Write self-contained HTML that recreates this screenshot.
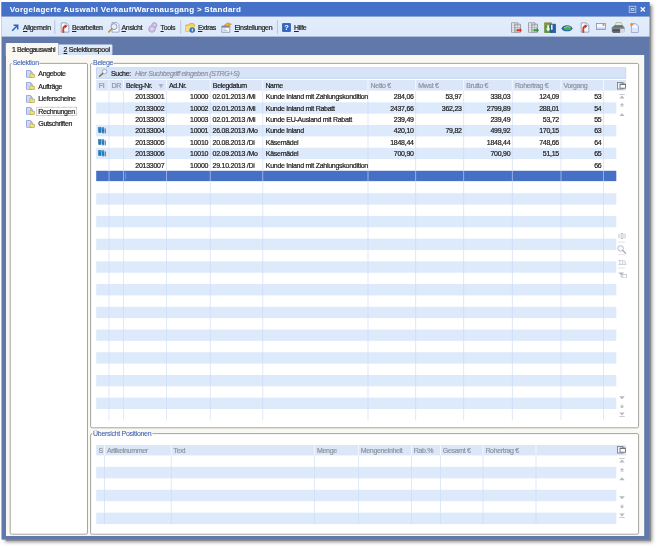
<!DOCTYPE html>
<html><head><meta charset="utf-8"><title>Vorgelagerte Auswahl</title>
<style>
*{box-sizing:border-box;margin:0;padding:0}
html,body{width:658px;height:548px;background:#fff;overflow:hidden}
body{font-family:"Liberation Sans",sans-serif;font-size:7px;letter-spacing:-0.33px;color:#1a1a1a;position:relative}
.a{position:absolute}
.t{position:absolute;white-space:nowrap;line-height:11px;height:11px;-webkit-text-stroke:0.2px currentColor}
.r{text-align:right}
.n{letter-spacing:-0.26px}
.m{letter-spacing:-0.27px}
.g{color:#8d949e}
.lbl{color:#3d62b8;-webkit-text-stroke:0.05px currentColor;letter-spacing:-0.3px}
.u{text-decoration:underline}
</style></head><body><div id="root" style="position:absolute;left:0;top:0;width:658px;height:548px;will-change:transform">

<div class="a" style="left:6px;top:6px;width:645px;height:535px;background:#8e8e8e;box-shadow:0 0 3.5px 1px #8e8e8e"></div>
<svg class="a" style="left:0;top:0" width="658" height="548" viewBox="0 0 658 548"><rect x="1.5" y="2" width="648" height="537.6" fill="#6079aa"/><rect x="1.5" y="2" width="648" height="14.6" fill="#4572c8"/><defs><linearGradient id="tbg" x1="0" y1="0" x2="0" y2="1"><stop offset="0" stop-color="#e4eefc"/><stop offset="1" stop-color="#dce9fa"/></linearGradient><linearGradient id="tab2" x1="0" y1="0" x2="0" y2="1"><stop offset="0" stop-color="#e3ecf9"/><stop offset="1" stop-color="#d3e0f3"/></linearGradient></defs><rect x="1.5" y="16.6" width="648" height="20" fill="url(#tbg)"/><rect x="6" y="55" width="638.2" height="481" fill="#faf8f2"/><rect x="5.8" y="43" width="52.6" height="13" fill="#faf8f2" rx="0.8"/><rect x="58.6" y="44.6" width="53.8" height="10.4" fill="url(#tab2)" rx="0.8"/><rect x="10.2" y="63.4" width="77.3" height="470.8" rx="1.5" fill="#fff" stroke="#9b9b95" stroke-width="0.9"/><rect x="11.8" y="61.4" width="27.7" height="4" fill="#faf8f2"/><rect x="90.6" y="63.4" width="548" height="364.4" rx="1.5" fill="#fff" stroke="#9b9b95" stroke-width="0.9"/><rect x="92.2" y="61.4" width="21.2" height="4" fill="#faf8f2"/><rect x="90.6" y="433.6" width="548" height="100.6" rx="1.5" fill="#fff" stroke="#9b9b95" stroke-width="0.9"/><rect x="92.2" y="431.6" width="60.2" height="4" fill="#faf8f2"/><rect x="96.4" y="67.8" width="529.4" height="10.5" fill="#d7e3f7" stroke="#bccdea" stroke-width="0.7"/><rect x="96.2" y="80" width="529.8" height="10.6" fill="#dbe7f9"/><rect x="96.2" y="102.31" width="520.1" height="11.36" fill="#ddeafc"/><rect x="96.2" y="125.03" width="520.1" height="11.36" fill="#ddeafc"/><rect x="96.2" y="147.75" width="520.1" height="11.36" fill="#ddeafc"/><rect x="96.2" y="170.77" width="520.1" height="10.36" fill="#4670c5"/><rect x="96.2" y="193.19" width="520.1" height="11.36" fill="#ddeafc"/><rect x="96.2" y="215.91" width="520.1" height="11.36" fill="#ddeafc"/><rect x="96.2" y="238.63" width="520.1" height="11.36" fill="#ddeafc"/><rect x="96.2" y="261.35" width="520.1" height="11.36" fill="#ddeafc"/><rect x="96.2" y="284.07" width="520.1" height="11.36" fill="#ddeafc"/><rect x="96.2" y="306.79" width="520.1" height="11.36" fill="#ddeafc"/><rect x="96.2" y="329.51" width="520.1" height="11.36" fill="#ddeafc"/><rect x="96.2" y="352.23" width="520.1" height="11.36" fill="#ddeafc"/><rect x="96.2" y="374.95" width="520.1" height="11.36" fill="#ddeafc"/><rect x="96.2" y="397.67" width="520.1" height="11.36" fill="#ddeafc"/><rect x="108.6" y="80" width="0.8" height="10.6" fill="#fff" fill-opacity=".85"/><rect x="108.6" y="90.95" width="0.8" height="329.44" fill="#c9daf3" fill-opacity=".75"/><rect x="123" y="80" width="0.8" height="10.6" fill="#fff" fill-opacity=".85"/><rect x="123" y="90.95" width="0.8" height="329.44" fill="#c9daf3" fill-opacity=".75"/><rect x="166" y="80" width="0.8" height="10.6" fill="#fff" fill-opacity=".85"/><rect x="166" y="90.95" width="0.8" height="329.44" fill="#c9daf3" fill-opacity=".75"/><rect x="209.8" y="80" width="0.8" height="10.6" fill="#fff" fill-opacity=".85"/><rect x="209.8" y="90.95" width="0.8" height="329.44" fill="#c9daf3" fill-opacity=".75"/><rect x="262.4" y="80" width="0.8" height="10.6" fill="#fff" fill-opacity=".85"/><rect x="262.4" y="90.95" width="0.8" height="329.44" fill="#c9daf3" fill-opacity=".75"/><rect x="367.6" y="80" width="0.8" height="10.6" fill="#fff" fill-opacity=".85"/><rect x="367.6" y="90.95" width="0.8" height="329.44" fill="#c9daf3" fill-opacity=".75"/><rect x="415.3" y="80" width="0.8" height="10.6" fill="#fff" fill-opacity=".85"/><rect x="415.3" y="90.95" width="0.8" height="329.44" fill="#c9daf3" fill-opacity=".75"/><rect x="463.3" y="80" width="0.8" height="10.6" fill="#fff" fill-opacity=".85"/><rect x="463.3" y="90.95" width="0.8" height="329.44" fill="#c9daf3" fill-opacity=".75"/><rect x="511.9" y="80" width="0.8" height="10.6" fill="#fff" fill-opacity=".85"/><rect x="511.9" y="90.95" width="0.8" height="329.44" fill="#c9daf3" fill-opacity=".75"/><rect x="560.6" y="80" width="0.8" height="10.6" fill="#fff" fill-opacity=".85"/><rect x="560.6" y="90.95" width="0.8" height="329.44" fill="#c9daf3" fill-opacity=".75"/><rect x="603.1" y="80" width="0.8" height="10.6" fill="#fff" fill-opacity=".85"/><rect x="603.1" y="90.95" width="0.8" height="329.44" fill="#c9daf3" fill-opacity=".75"/><rect x="96.2" y="445" width="529.8" height="10.4" fill="#dbe7f9"/><rect x="96.2" y="466.85" width="520.1" height="11.45" fill="#ddeafc"/><rect x="96.2" y="489.75" width="520.1" height="11.45" fill="#ddeafc"/><rect x="96.2" y="512.65" width="520.1" height="11.45" fill="#ddeafc"/><rect x="104.1" y="445" width="0.8" height="10.4" fill="#fff" fill-opacity=".85"/><rect x="104.1" y="455.4" width="0.8" height="68.7" fill="#c9daf3" fill-opacity=".75"/><rect x="170.8" y="445" width="0.8" height="10.4" fill="#fff" fill-opacity=".85"/><rect x="170.8" y="455.4" width="0.8" height="68.7" fill="#c9daf3" fill-opacity=".75"/><rect x="314.2" y="445" width="0.8" height="10.4" fill="#fff" fill-opacity=".85"/><rect x="314.2" y="455.4" width="0.8" height="68.7" fill="#c9daf3" fill-opacity=".75"/><rect x="358" y="445" width="0.8" height="10.4" fill="#fff" fill-opacity=".85"/><rect x="358" y="455.4" width="0.8" height="68.7" fill="#c9daf3" fill-opacity=".75"/><rect x="411" y="445" width="0.8" height="10.4" fill="#fff" fill-opacity=".85"/><rect x="411" y="455.4" width="0.8" height="68.7" fill="#c9daf3" fill-opacity=".75"/><rect x="440" y="445" width="0.8" height="10.4" fill="#fff" fill-opacity=".85"/><rect x="440" y="455.4" width="0.8" height="68.7" fill="#c9daf3" fill-opacity=".75"/><rect x="482.6" y="445" width="0.8" height="10.4" fill="#fff" fill-opacity=".85"/><rect x="482.6" y="455.4" width="0.8" height="68.7" fill="#c9daf3" fill-opacity=".75"/><rect x="535.6" y="445" width="0.8" height="10.4" fill="#fff" fill-opacity=".85"/><rect x="535.6" y="455.4" width="0.8" height="68.7" fill="#c9daf3" fill-opacity=".75"/><rect x="36.6" y="107.3" width="39.8" height="8.2" fill="none" stroke="#6c6c6c" stroke-width="0.6" stroke-dasharray="0.7 0.5"/><rect x="54.4" y="20.3" width="0.9" height="13.6" fill="#b4bfd3"/><rect x="180.3" y="20.3" width="0.9" height="13.6" fill="#b4bfd3"/><rect x="276.9" y="20.3" width="0.9" height="13.6" fill="#b4bfd3"/><rect x="618" y="241.7" width="7" height="0.7" fill="#d5d8dd"/><rect x="618" y="254.4" width="7" height="0.7" fill="#d5d8dd"/><rect x="618" y="267.7" width="7" height="0.7" fill="#d5d8dd"/><rect x="125.3" y="172.47" width="0.8" height="7" fill="#8aa0cf"/></svg>
<div class="t lbl" style="left:12.7px;top:57.4px">Selektion</div>
<div class="t lbl" style="left:93.1px;top:57.4px">Belege</div>
<div class="t lbl" style="left:93.1px;top:427.6px">Übersicht Positionen</div>
<div class="t" style="left:9.8px;top:3.2px;font-size:8px;line-height:13px;height:13px;font-weight:bold;color:#fff;letter-spacing:0.27px;-webkit-text-stroke:0">Vorgelagerte Auswahl Verkauf/Warenausgang &gt; Standard</div>
<svg class="a" style="left:628px;top:5px" width="20" height="9" viewBox="0 0 20 9"><rect x="1.2" y="1.3" width="6.6" height="6.2" fill="none" stroke="#b4c8f0" stroke-width="0.9"/><rect x="3.1" y="3.5" width="2.8" height="1.8" fill="#4572c8" stroke="#d6e2f7" stroke-width="0.8"/><path d="M12.7 2.3L16.9 6.5M16.9 2.3L12.7 6.5" stroke="#f4f7fd" stroke-width="1.3"/></svg>
<div class="t" style="left:12px;top:44.2px;letter-spacing:-0.45px">1 Belegauswahl</div>
<div class="t" style="left:63.6px;top:44.2px"><span class="u">2</span> Selektionspool</div>
<svg class="a" style="left:11px;top:24px" width="8" height="8" viewBox="0 0 8 8"><path d="M1.2 6.8L6.2 1.8M2.6 1.3H6.7V5.4" fill="none" stroke="#2f5fc0" stroke-width="1.5"/></svg>
<div class="t" style="left:23px;top:21.5px;color:#222"><span class="u">A</span>llgemein</div>
<svg class="a" style="left:60px;top:22px" width="10" height="11" viewBox="0 0 10 11"><path d="M1.2 0.9h5.2l2.4 2.4v6.8H1.2z" fill="#fbfcff" stroke="#8193b6" stroke-width="0.8"/><path d="M6.2 1v2.5h2.5" fill="#dfe7f5" stroke="#8193b6" stroke-width="0.6"/><path d="M3.3 10.8V6.6Q3.3 4.6 5.2 4.4" fill="none" stroke="#cf3f22" stroke-width="1.9"/><path d="M4.6 2.4L7.2 4.3L4.8 6.4z" fill="#b02a1c"/></svg>
<div class="t" style="left:72px;top:21.5px;color:#222"><span class="u">B</span>earbeiten</div>
<svg class="a" style="left:108px;top:22px" width="12" height="11" viewBox="0 0 12 11"><path d="M4 0.6h5l2 2v7.5H4z" fill="#f6f9fe" stroke="#8b9cc0" stroke-width="0.8"/><circle cx="6" cy="4.6" r="3" fill="#e4eefb" fill-opacity=".9" stroke="#8593ad" stroke-width="0.9"/><path d="M3.8 6.8L0.8 10" stroke="#c08a45" stroke-width="1.6" stroke-linecap="round"/></svg>
<div class="t" style="left:121.5px;top:21.5px;color:#222"><span class="u">A</span>nsicht</div>
<svg class="a" style="left:148px;top:22px" width="10" height="11" viewBox="0 0 10 11"><circle cx="6.3" cy="3.2" r="2.6" fill="#cdbfe2" stroke="#a593c6" stroke-width="0.7"/><circle cx="4" cy="7" r="3.3" fill="#cfc3e4" stroke="#a593c6" stroke-width="0.7"/><circle cx="4" cy="7" r="1" fill="#e9e2f4"/><circle cx="6.4" cy="3.2" r="0.8" fill="#eee8f7"/></svg>
<div class="t" style="left:160.5px;top:21.5px;color:#222"><span class="u">T</span>ools</div>
<svg class="a" style="left:185px;top:22px" width="11" height="11" viewBox="0 0 11 11"><path d="M0.8 3h3l1-1.5h3.7l1 1.5v6.5H0.8z" fill="#f3cf52" stroke="#cda033" stroke-width="0.7"/><path d="M0.8 4.2h9v5.3h-9z" fill="#f8df7e"/><circle cx="7.2" cy="8" r="2.5" fill="#2b78d6" stroke="#1d5bb0" stroke-width="0.5"/><rect x="6.8" y="6.6" width="0.9" height="2.8" fill="#fff"/></svg>
<div class="t" style="left:198px;top:21.5px;color:#222"><span class="u">E</span>xtras</div>
<svg class="a" style="left:221px;top:22px" width="11" height="11" viewBox="0 0 11 11"><path d="M0.8 4h8v6.3h-8z" fill="#f7f9fd" stroke="#7f90b2" stroke-width="0.8"/><path d="M1 4h7.6v1.6H1z" fill="#6d86ba"/><path d="M3 3.4L6.5 0.8L10.4 2.2L7 4.6z" fill="#f0a92a" stroke="#c07a18" stroke-width="0.5"/><path d="M2.2 7h2.2M2.2 8.6h4" stroke="#9aa9c6" stroke-width="0.7"/></svg>
<div class="t" style="left:234.5px;top:21.5px;color:#222"><span class="u">E</span>instellungen</div>
<svg class="a" style="left:282px;top:23px" width="9" height="9" viewBox="0 0 9 9"><rect x="0.3" y="0.3" width="8.4" height="8.4" rx="1" fill="#3565c3" stroke="#234a9a" stroke-width="0.6"/><text x="4.5" y="7.3" font-family="Liberation Sans" font-weight="bold" font-size="7.5" fill="#fff" text-anchor="middle">?</text></svg>
<div class="t" style="left:294px;top:21.5px;color:#222"><span class="u">H</span>ilfe</div>
<svg class="a" style="left:510px;top:21.5px" width="12" height="11" viewBox="0 0 12 11"><path d="M1.5 0.8h6.5v9.5H1.5z" fill="#f2f3f5" stroke="#8e9096" stroke-width="0.8"/><path d="M5 2.2h5.5v8H5z" fill="#e9eaee" stroke="#8e9096" stroke-width="0.8"/><path d="M1.5 3.2h9M1.5 5.6h9M1.5 8h9M4.5 0.8v9.5M7.6 2.2v8" stroke="#9a9ca3" stroke-width="0.6"/><path d="M6.5 7.2h3.2V5.6L12 8.2L9.7 10.8V9.2H6.5z" fill="#d93a30"/></svg>
<svg class="a" style="left:527px;top:21.5px" width="12" height="11" viewBox="0 0 12 11"><path d="M1.5 0.8h6.5v9.5H1.5z" fill="#f2f3f5" stroke="#8e9096" stroke-width="0.8"/><path d="M5 2.2h5.5v8H5z" fill="#e9eaee" stroke="#8e9096" stroke-width="0.8"/><path d="M1.5 3.2h9M1.5 5.6h9M1.5 8h9M4.5 0.8v9.5M7.6 2.2v8" stroke="#9a9ca3" stroke-width="0.6"/><path d="M6.5 7.2h3.2V5.6L12 8.2L9.7 10.8V9.2H6.5z" fill="#2e9a3a"/></svg>
<svg class="a" style="left:544px;top:21.5px" width="12" height="11.5" viewBox="0 0 12 11.5"><path d="M0.6 0.8h6.8v10H0.6z" fill="#8e9a32" stroke="#6b7524" stroke-width="0.6"/><path d="M1.2 3.6h5.6v7H1.2z" fill="#3aa53d"/><path d="M6.6 2.2h5v8.6h-5z" fill="#2a5da8" stroke="#1d4580" stroke-width="0.6"/><path d="M3.2 3.2h1.8v3.4h1.3L4.1 9.4L1.9 6.6h1.3z" fill="#f4f8ee"/><path d="M7 2.8h1.6v5H7z" fill="#e8eef8"/></svg>
<svg class="a" style="left:561px;top:25px" width="12" height="7" viewBox="0 0 12 7"><ellipse cx="6" cy="3.3" rx="5.4" ry="3" fill="#2f62b5"/><ellipse cx="6.4" cy="3.3" rx="3.7" ry="1.9" fill="#45b04a"/><path d="M3 2.6Q6 0.8 9.6 2.2" stroke="#bfe3a0" stroke-width="0.7" fill="none"/></svg>
<svg class="a" style="left:579.5px;top:21.5px" width="10" height="11" viewBox="0 0 10 11"><path d="M1.2 0.9h5.2l2.4 2.4v6.8H1.2z" fill="#fbfcff" stroke="#8193b6" stroke-width="0.8"/><path d="M6.2 1v2.5h2.5" fill="#dfe7f5" stroke="#8193b6" stroke-width="0.6"/><path d="M3.3 10.8V6.6Q3.3 4.6 5.2 4.4" fill="none" stroke="#cf3f22" stroke-width="1.9"/><path d="M4.6 2.4L7.2 4.3L4.8 6.4z" fill="#b02a1c"/></svg>
<svg class="a" style="left:595.5px;top:23.3px" width="10" height="7.2" viewBox="0 0 10 7.2"><rect x="0.4" y="0.4" width="9.2" height="6.2" fill="#f6f7fc" stroke="#7f8db3" stroke-width="0.8"/><path d="M0.6 5.2h8.8" stroke="#b6bfda" stroke-width="1"/><rect x="6.6" y="1.3" width="1.8" height="1.4" fill="#c9564e"/></svg>
<svg class="a" style="left:610.5px;top:21.5px" width="14" height="11.5" viewBox="0 0 14 11.5"><path d="M4.2 3.6L5.2 0.5h5l1 3.1z" fill="#dfeccf" stroke="#8a9a80" stroke-width="0.5"/><path d="M0.8 5.5L3.6 3.2h8L13.4 5.5V9.6L11 11.2H2.2L0.8 9.6z" fill="#6a6e74"/><path d="M0.8 5.5h12.6V6.6H0.8z" fill="#8c9097"/><path d="M9.2 6.8h4.2v3l-2 1.4h-2.2z" fill="#d8dade"/><path d="M2 7.6h6.5v1.6H2z" fill="#4b4e53"/></svg>
<svg class="a" style="left:630px;top:23px" width="9" height="10" viewBox="0 0 9 10"><path d="M1.4 0.8h4.6l2.3 2.3v6.3H1.4z" fill="#f2f6fd" stroke="#7f96c4" stroke-width="0.8"/><path d="M1.8 5h6v4H1.8z" fill="#dbe6f8"/><circle cx="1.7" cy="1.5" r="1.4" fill="#f0892a"/></svg>
<svg class="a" style="left:25.7px;top:69.5px" width="9" height="8" viewBox="0 0 9 8"><path d="M0.5 0.5h3.9l1.8 1.8v5H0.5z" fill="#e3e8f8" stroke="#8796d4" stroke-width="0.8"/><path d="M1.2 1.2h2v5.4h-2z" fill="#cfd6f2"/><path d="M4.4 0.6v1.8h1.7" fill="none" stroke="#8796d4" stroke-width="0.6"/><path d="M3.9 3.6h1.5l0.5 0.6h2.5v3.2H3.9z" fill="#f2e77f" stroke="#a8993a" stroke-width="0.6"/></svg>
<div class="t" style="left:38.3px;top:68.1px">Angebote</div>
<svg class="a" style="left:25.7px;top:82.0px" width="9" height="8" viewBox="0 0 9 8"><path d="M0.5 0.5h3.9l1.8 1.8v5H0.5z" fill="#e3e8f8" stroke="#8796d4" stroke-width="0.8"/><path d="M1.2 1.2h2v5.4h-2z" fill="#cfd6f2"/><path d="M4.4 0.6v1.8h1.7" fill="none" stroke="#8796d4" stroke-width="0.6"/><path d="M3.9 3.6h1.5l0.5 0.6h2.5v3.2H3.9z" fill="#f2e77f" stroke="#a8993a" stroke-width="0.6"/></svg>
<div class="t" style="left:38.3px;top:80.6px">Aufträge</div>
<svg class="a" style="left:25.7px;top:94.5px" width="9" height="8" viewBox="0 0 9 8"><path d="M0.5 0.5h3.9l1.8 1.8v5H0.5z" fill="#e3e8f8" stroke="#8796d4" stroke-width="0.8"/><path d="M1.2 1.2h2v5.4h-2z" fill="#cfd6f2"/><path d="M4.4 0.6v1.8h1.7" fill="none" stroke="#8796d4" stroke-width="0.6"/><path d="M3.9 3.6h1.5l0.5 0.6h2.5v3.2H3.9z" fill="#f2e77f" stroke="#a8993a" stroke-width="0.6"/></svg>
<div class="t" style="left:38.3px;top:93.1px">Lieferscheine</div>
<svg class="a" style="left:25.7px;top:107.0px" width="9" height="8" viewBox="0 0 9 8"><path d="M0.5 0.5h3.9l1.8 1.8v5H0.5z" fill="#e3e8f8" stroke="#8796d4" stroke-width="0.8"/><path d="M1.2 1.2h2v5.4h-2z" fill="#cfd6f2"/><path d="M4.4 0.6v1.8h1.7" fill="none" stroke="#8796d4" stroke-width="0.6"/><path d="M3.9 3.6h1.5l0.5 0.6h2.5v3.2H3.9z" fill="#f2e77f" stroke="#a8993a" stroke-width="0.6"/></svg>
<div class="t" style="left:38.3px;top:105.6px">Rechnungen</div>
<svg class="a" style="left:25.7px;top:119.5px" width="9" height="8" viewBox="0 0 9 8"><path d="M0.5 0.5h3.9l1.8 1.8v5H0.5z" fill="#e3e8f8" stroke="#8796d4" stroke-width="0.8"/><path d="M1.2 1.2h2v5.4h-2z" fill="#cfd6f2"/><path d="M4.4 0.6v1.8h1.7" fill="none" stroke="#8796d4" stroke-width="0.6"/><path d="M3.9 3.6h1.5l0.5 0.6h2.5v3.2H3.9z" fill="#f2e77f" stroke="#a8993a" stroke-width="0.6"/></svg>
<div class="t" style="left:38.3px;top:118.1px">Gutschriften</div>
<svg class="a" style="left:98px;top:68px" width="10" height="10" viewBox="0 0 10 10"><circle cx="6.6" cy="3.6" r="2.3" fill="#e6f6fb" stroke="#9aa6ba" stroke-width="0.9"/><path d="M4.6 5.6L1.6 8.2" stroke="#8a6a50" stroke-width="1.5" stroke-linecap="round"/></svg>
<div class="t" style="left:111px;top:67.7px">Suche:</div>
<div class="t g" style="left:135px;top:67.7px;font-style:italic">Hier Suchbegriff eingeben (STRG+S)</div>
<div class="t g" style="left:98.8px;top:79.8px">FI</div>
<div class="t g" style="left:111.6px;top:79.8px">DR</div>
<div class="t" style="left:126.0px;top:79.8px">Beleg-Nr.</div>
<div class="t" style="left:169.0px;top:79.8px">Ad.Nr.</div>
<div class="t" style="left:212.8px;top:79.8px">Belegdatum</div>
<div class="t" style="left:265.4px;top:79.8px">Name</div>
<div class="t g" style="left:370.6px;top:79.8px">Netto €</div>
<div class="t g" style="left:418.3px;top:79.8px">Mwst €</div>
<div class="t g" style="left:466.3px;top:79.8px">Brutto €</div>
<div class="t g" style="left:514.9px;top:79.8px">Rohertrag €</div>
<div class="t g" style="left:563.6px;top:79.8px">Vorgang</div>
<svg class="a" style="left:157.6px;top:83px" width="6" height="6" viewBox="0 0 6 6"><path d="M0.5 1h5L3 5.5z" fill="#a9b3c4"/></svg>
<div class="t r n" style="left:123.4px;width:41.0px;top:91.4px">20133001</div>
<div class="t r n" style="left:166.4px;width:41.8px;top:91.4px">10000</div>
<div class="t n" style="left:212.6px;top:91.4px">02.01.2013 /Mi</div>
<div class="t m" style="left:265.8px;top:91.4px">Kunde Inland mit Zahlungskondition</div>
<div class="t r n" style="left:368.0px;width:45.7px;top:91.4px">284,06</div>
<div class="t r n" style="left:415.7px;width:46.0px;top:91.4px">53,97</div>
<div class="t r n" style="left:463.7px;width:46.6px;top:91.4px">338,03</div>
<div class="t r n" style="left:512.3px;width:46.7px;top:91.4px">124,09</div>
<div class="t r n" style="left:561.0px;width:40.5px;top:91.4px">53</div>
<div class="t r n" style="left:123.4px;width:41.0px;top:102.7px">20133002</div>
<div class="t r n" style="left:166.4px;width:41.8px;top:102.7px">10002</div>
<div class="t n" style="left:212.6px;top:102.7px">02.01.2013 /Mi</div>
<div class="t m" style="left:265.8px;top:102.7px">Kunde Inland mit Rabatt</div>
<div class="t r n" style="left:368.0px;width:45.7px;top:102.7px">2437,66</div>
<div class="t r n" style="left:415.7px;width:46.0px;top:102.7px">362,23</div>
<div class="t r n" style="left:463.7px;width:46.6px;top:102.7px">2799,89</div>
<div class="t r n" style="left:512.3px;width:46.7px;top:102.7px">288,01</div>
<div class="t r n" style="left:561.0px;width:40.5px;top:102.7px">54</div>
<div class="t r n" style="left:123.4px;width:41.0px;top:114.1px">20133003</div>
<div class="t r n" style="left:166.4px;width:41.8px;top:114.1px">10003</div>
<div class="t n" style="left:212.6px;top:114.1px">02.01.2013 /Mi</div>
<div class="t m" style="left:265.8px;top:114.1px">Kunde EU-Ausland mit Rabatt</div>
<div class="t r n" style="left:368.0px;width:45.7px;top:114.1px">239,49</div>
<div class="t r n" style="left:463.7px;width:46.6px;top:114.1px">239,49</div>
<div class="t r n" style="left:512.3px;width:46.7px;top:114.1px">53,72</div>
<div class="t r n" style="left:561.0px;width:40.5px;top:114.1px">55</div>
<svg class="a" style="left:98.3px;top:127.0px" width="8" height="7" viewBox="0 0 8 7"><path d="M0.2 0.2h2.9v5.3H0.2zM3.6 0.5h2.5v5.2H3.6z" fill="#2579b8"/><path d="M0.2 0.2h2.9v1.6H0.2zM3.6 0.5h2.5v1.5H3.6z" fill="#3b8fcc"/><path d="M0.8 5.5h2.2v0.6H0.8zM4.2 5.7h1.8v0.5H4.2z" fill="#1c5a96"/><path d="M6.7 1.6h1v4.6h-1z" fill="#1f5f9e"/></svg>
<div class="t r n" style="left:123.4px;width:41.0px;top:125.4px">20133004</div>
<div class="t r n" style="left:166.4px;width:41.8px;top:125.4px">10001</div>
<div class="t n" style="left:212.6px;top:125.4px">26.08.2013 /Mo</div>
<div class="t m" style="left:265.8px;top:125.4px">Kunde Inland</div>
<div class="t r n" style="left:368.0px;width:45.7px;top:125.4px">420,10</div>
<div class="t r n" style="left:415.7px;width:46.0px;top:125.4px">79,82</div>
<div class="t r n" style="left:463.7px;width:46.6px;top:125.4px">499,92</div>
<div class="t r n" style="left:512.3px;width:46.7px;top:125.4px">170,15</div>
<div class="t r n" style="left:561.0px;width:40.5px;top:125.4px">63</div>
<svg class="a" style="left:98.3px;top:138.5px" width="8" height="7" viewBox="0 0 8 7"><path d="M0.2 0.2h2.9v5.3H0.2zM3.6 0.5h2.5v5.2H3.6z" fill="#2579b8"/><path d="M0.2 0.2h2.9v1.6H0.2zM3.6 0.5h2.5v1.5H3.6z" fill="#3b8fcc"/><path d="M0.8 5.5h2.2v0.6H0.8zM4.2 5.7h1.8v0.5H4.2z" fill="#1c5a96"/><path d="M6.7 1.6h1v4.6h-1z" fill="#1f5f9e"/></svg>
<div class="t r n" style="left:123.4px;width:41.0px;top:136.8px">20133005</div>
<div class="t r n" style="left:166.4px;width:41.8px;top:136.8px">10010</div>
<div class="t n" style="left:212.6px;top:136.8px">20.08.2013 /Di</div>
<div class="t m" style="left:265.8px;top:136.8px">Käsemädel</div>
<div class="t r n" style="left:368.0px;width:45.7px;top:136.8px">1848,44</div>
<div class="t r n" style="left:463.7px;width:46.6px;top:136.8px">1848,44</div>
<div class="t r n" style="left:512.3px;width:46.7px;top:136.8px">748,66</div>
<div class="t r n" style="left:561.0px;width:40.5px;top:136.8px">64</div>
<svg class="a" style="left:98.3px;top:150.0px" width="8" height="7" viewBox="0 0 8 7"><path d="M0.2 0.2h2.9v5.3H0.2zM3.6 0.5h2.5v5.2H3.6z" fill="#2579b8"/><path d="M0.2 0.2h2.9v1.6H0.2zM3.6 0.5h2.5v1.5H3.6z" fill="#3b8fcc"/><path d="M0.8 5.5h2.2v0.6H0.8zM4.2 5.7h1.8v0.5H4.2z" fill="#1c5a96"/><path d="M6.7 1.6h1v4.6h-1z" fill="#1f5f9e"/></svg>
<div class="t r n" style="left:123.4px;width:41.0px;top:148.2px">20133006</div>
<div class="t r n" style="left:166.4px;width:41.8px;top:148.2px">10010</div>
<div class="t n" style="left:212.6px;top:148.2px">02.09.2013 /Mo</div>
<div class="t m" style="left:265.8px;top:148.2px">Käsemädel</div>
<div class="t r n" style="left:368.0px;width:45.7px;top:148.2px">700,90</div>
<div class="t r n" style="left:463.7px;width:46.6px;top:148.2px">700,90</div>
<div class="t r n" style="left:512.3px;width:46.7px;top:148.2px">51,15</div>
<div class="t r n" style="left:561.0px;width:40.5px;top:148.2px">65</div>
<div class="t r n" style="left:123.4px;width:41.0px;top:159.5px">20133007</div>
<div class="t r n" style="left:166.4px;width:41.8px;top:159.5px">10000</div>
<div class="t n" style="left:212.6px;top:159.5px">29.10.2013 /Di</div>
<div class="t m" style="left:265.8px;top:159.5px">Kunde Inland mit Zahlungskondition</div>
<div class="t r n" style="left:561.0px;width:40.5px;top:159.5px">66</div>
<div class="t g" style="left:98.6px;top:444.7px">S</div>
<div class="t g" style="left:106.9px;top:444.7px">Artikelnummer</div>
<div class="t g" style="left:173.6px;top:444.7px">Text</div>
<div class="t g" style="left:317.0px;top:444.7px">Menge</div>
<div class="t g" style="left:360.8px;top:444.7px">Mengeneinheit</div>
<div class="t g" style="left:413.8px;top:444.7px">Rab.%</div>
<div class="t g" style="left:442.8px;top:444.7px">Gesamt €</div>
<div class="t g" style="left:485.4px;top:444.7px">Rohertrag €</div>
<svg class="a" style="left:617px;top:81.5px" width="9" height="8" viewBox="0 0 9 8"><rect x="0.5" y="0.5" width="5.5" height="6.5" fill="#f4f6fa" stroke="#7d828a" stroke-width="0.9"/><rect x="3" y="2.2" width="5.5" height="4" fill="#fdfdfd" stroke="#6e737b" stroke-width="0.9"/><path d="M3 2.4h5.5" stroke="#6e737b" stroke-width="1.2"/></svg>
<svg class="a" style="left:618.5px;top:93.5px" width="6" height="5" viewBox="0 0 6 5"><path d="M0.3 0.4h5.4" stroke="#b4b8be" stroke-width="0.8"/><path d="M3 1.6L5.6 4.6H0.4z" fill="#b4b8be"/></svg>
<svg class="a" style="left:618.5px;top:103.1px" width="6" height="4.5" viewBox="0 0 6 4.5"><path d="M3 0L5.2 2.2H0.8z" fill="#b4b8be"/><path d="M3 2L4.8 3.8H1.2z" fill="#b4b8be" opacity=".7"/></svg>
<svg class="a" style="left:618.5px;top:112.5px" width="6" height="3.5" viewBox="0 0 6 3.5"><path d="M3 0.2L5.8 3.2H0.2z" fill="#b4b8be"/></svg>
<svg class="a" style="left:618.5px;top:395.5px" width="6" height="3.5" viewBox="0 0 6 3.5"><path d="M3 3.3L5.8 0.3H0.2z" fill="#b4b8be"/></svg>
<svg class="a" style="left:618.5px;top:403.5px" width="6" height="4.5" viewBox="0 0 6 4.5"><path d="M3 4.5L5.2 2.3H0.8z" fill="#b4b8be"/><path d="M3 2.5L4.8 0.7H1.2z" fill="#b4b8be" opacity=".7"/></svg>
<svg class="a" style="left:618.5px;top:412.0px" width="6" height="5" viewBox="0 0 6 5"><path d="M0.3 4.6h5.4" stroke="#b4b8be" stroke-width="0.8"/><path d="M3 3.4L5.6 0.4H0.4z" fill="#b4b8be"/></svg>
<svg class="a" style="left:617px;top:446px" width="9" height="8" viewBox="0 0 9 8"><rect x="0.5" y="0.5" width="5.5" height="6.5" fill="#f4f6fa" stroke="#7d828a" stroke-width="0.9"/><rect x="3" y="2.2" width="5.5" height="4" fill="#fdfdfd" stroke="#6e737b" stroke-width="0.9"/><path d="M3 2.4h5.5" stroke="#6e737b" stroke-width="1.2"/></svg>
<svg class="a" style="left:618.5px;top:458px" width="6" height="5" viewBox="0 0 6 5"><path d="M0.3 0.4h5.4" stroke="#b4b8be" stroke-width="0.8"/><path d="M3 1.6L5.6 4.6H0.4z" fill="#b4b8be"/></svg>
<svg class="a" style="left:618.5px;top:467.6px" width="6" height="4.5" viewBox="0 0 6 4.5"><path d="M3 0L5.2 2.2H0.8z" fill="#b4b8be"/><path d="M3 2L4.8 3.8H1.2z" fill="#b4b8be" opacity=".7"/></svg>
<svg class="a" style="left:618.5px;top:477px" width="6" height="3.5" viewBox="0 0 6 3.5"><path d="M3 0.2L5.8 3.2H0.2z" fill="#b4b8be"/></svg>
<svg class="a" style="left:618.5px;top:496px" width="6" height="3.5" viewBox="0 0 6 3.5"><path d="M3 3.3L5.8 0.3H0.2z" fill="#b4b8be"/></svg>
<svg class="a" style="left:618.5px;top:504px" width="6" height="4.5" viewBox="0 0 6 4.5"><path d="M3 4.5L5.2 2.3H0.8z" fill="#b4b8be"/><path d="M3 2.5L4.8 0.7H1.2z" fill="#b4b8be" opacity=".7"/></svg>
<svg class="a" style="left:618.5px;top:512.5px" width="6" height="5" viewBox="0 0 6 5"><path d="M0.3 4.6h5.4" stroke="#b4b8be" stroke-width="0.8"/><path d="M3 3.4L5.6 0.4H0.4z" fill="#b4b8be"/></svg>
<svg class="a" style="left:618px;top:232.5px" width="8" height="6" viewBox="0 0 8 6"><path d="M1.2 0.5Q0.4 3 1.2 5.5M3.2 0.5h1.8v5H3.2zM6.8 0.5Q7.6 3 6.8 5.5" fill="none" stroke="#b4b8be" stroke-width="0.8"/></svg>
<svg class="a" style="left:617px;top:244.5px" width="10" height="9" viewBox="0 0 10 9"><circle cx="3.6" cy="3.4" r="2.8" fill="#f7f9fc" stroke="#b4b8be" stroke-width="0.9"/><path d="M5.8 5.6L8.6 8.2" stroke="#a9adb3" stroke-width="1.3" stroke-linecap="round"/></svg>
<svg class="a" style="left:617.5px;top:259.5px" width="9" height="5" viewBox="0 0 9 5"><path d="M0.3 0.4h3.2M1.9 0.4v3.6M4.6 0.4v3.6M4.6 0.4h1.2M7 0.4Q5.8 2 7.4 2.4Q8.2 3.8 6.4 4M0.3 4.6h8.2" fill="none" stroke="#b4b8be" stroke-width="0.7"/></svg>
<svg class="a" style="left:617.5px;top:271.5px" width="9" height="6.5" viewBox="0 0 9 6.5"><path d="M0.2 0.4h6L3.6 3v3L2.8 5.4V3z" fill="#b4b8be"/><rect x="4.8" y="2.6" width="3.6" height="3.4" fill="none" stroke="#b4b8be" stroke-width="0.7"/></svg>
</div></body></html>
